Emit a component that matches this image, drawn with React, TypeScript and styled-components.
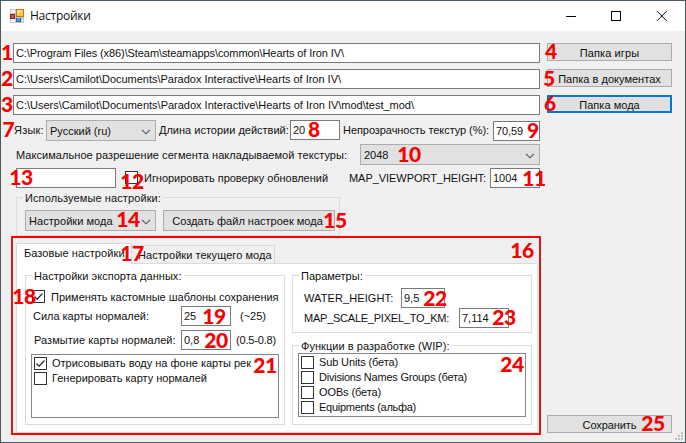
import React from 'react';
import styled, { createGlobalStyle, css } from 'styled-components';

const GlobalStyle = createGlobalStyle`
  *, *::before, *::after { box-sizing: border-box; }
  body {
    margin: 0;
    font: 11px/13px "Liberation Sans", Arial, sans-serif;
    color: #101010;
    white-space: pre;
  }
`;

const Window = styled.div`
  position: relative;
  display: flex;
  flex-direction: column;
  width: 686px;
  height: 443px;
  background: #f0f0f0;
  border: 1px solid #4d5a63;
  overflow: hidden;
`;

const TitleBar = styled.header`
  display: flex;
  align-items: center;
  flex: none;
  height: 30px;
  padding: 0 1px 0 9px;
  background: #fff;
`;

const Title = styled.h1`
  flex: 1;
  margin: 0 0 0 6px;
  font: 400 12px/16px "Open Sans", "Noto Sans", sans-serif;
  letter-spacing: -0.25px;
`;

const CaptionButton = styled.span`
  display: flex;
  align-items: center;
  width: 45px;
  height: 30px;
  padding-left: 17px;
`;

const Body = styled.main`
  display: flex;
  flex: 1;
  padding: 12px 0 0 10px;
`;

const FormColumn = styled.div`
  width: 530px;
`;

const PathList = styled.div`
  display: grid;
  gap: 6px;
  width: 527px;
  margin-left: 2px;
`;

const Row = styled.div<{ $top?: number; $left?: number; $height?: number }>`
  display: flex;
  align-items: flex-start;
  height: ${(p) => p.$height ?? 20}px;
  margin-top: ${(p) => p.$top ?? 0}px;
  margin-left: ${(p) => p.$left ?? 0}px;
`;

const Label = styled.span<{ $width?: number; $left?: number; $top?: number; $track?: number }>`
  flex: none;
  width: ${(p) => (p.$width ? `${p.$width}px` : 'auto')};
  margin-left: ${(p) => p.$left ?? 0}px;
  margin-top: ${(p) => p.$top ?? 4}px;
  letter-spacing: ${(p) => p.$track ?? 0}px;
`;

const Field = styled.div<{ $width?: number; $track?: number; $top?: number }>`
  flex: none;
  width: ${(p) => (p.$width ? `${p.$width}px` : 'auto')};
  height: 20px;
  margin-top: ${(p) => p.$top ?? 0}px;
  padding: 3px 0 0 2px;
  border: 1px solid #7a7a7a;
  background: #fff;
  letter-spacing: ${(p) => p.$track ?? 0}px;
`;

const SelectBox = styled.div<{ $width: number; $track?: number }>`
  display: flex;
  flex: none;
  align-items: center;
  justify-content: space-between;
  width: ${(p) => p.$width}px;
  height: 21px;
  padding: 2px 4px 0 3px;
  border: 1px solid #adadad;
  background: #e1e1e1;
  letter-spacing: ${(p) => p.$track ?? 0}px;
`;

const Button = styled.button<{ $width: number; $focused?: boolean; $track?: number }>`
  flex: none;
  width: ${(p) => p.$width}px;
  height: 18px;
  padding: 3px 0 0;
  border: 1px solid #adadad;
  background: #e1e1e1;
  color: inherit;
  font: inherit;
  text-align: center;
  letter-spacing: ${(p) => p.$track ?? 0}px;
  ${(p) => p.$focused && css`
    border-color: #0078d7;
    box-shadow: inset 0 0 0 1px #0078d7;
  `}
`;

const CreateButton = styled(Button)`
  height: 21px;
  margin-left: 7px;
  padding: 2px 3px 0 0;
`;

const ActionColumn = styled.aside`
  display: flex;
  flex-direction: column;
  gap: 8px;
  margin-left: 6px;
`;

const SaveButton = styled(Button)`
  margin: auto 0 9px;
`;

const Group = styled.fieldset<{ $width: number; $height: number; $left?: number; $top?: number }>`
  width: ${(p) => p.$width}px;
  height: ${(p) => p.$height}px;
  min-width: 0;
  margin: ${(p) => p.$top ?? 0}px 0 0 ${(p) => p.$left ?? 0}px;
  padding: 0;
  border: 1px solid #dcdcdc;
`;

const Legend = styled.legend<{ $track?: number }>`
  height: 13px;
  margin-left: 6px;
  padding: 0 2px;
  line-height: 15px;
  letter-spacing: ${(p) => p.$track ?? 0}px;
`;

const Box = styled.span<{ $left?: number; $top?: number }>`
  display: grid;
  place-items: center;
  flex: none;
  width: 13px;
  height: 13px;
  margin-left: ${(p) => p.$left ?? 0}px;
  margin-top: ${(p) => p.$top ?? 0}px;
  border: 1px solid #333;
  background: #fff;
`;

const TabFrame = styled.section`
  width: 530px;
  height: 199px;
  padding: 5px 1px 0 3px;
  border: 2px solid #f00;
  border-left-color: #d61a1e;
  border-right-color: #d0181c;
`;

const TabStrip = styled.nav`
  position: relative;
  display: flex;
  align-items: flex-end;
  height: 21px;
  margin-bottom: -1px;
`;

const Tab = styled.div<{ $active?: boolean; $width: number; $track: number }>`
  width: ${(p) => p.$width}px;
  height: ${(p) => (p.$active ? 21 : 18)}px;
  margin-bottom: ${(p) => (p.$active ? 0 : 1)}px;
  padding: ${(p) => (p.$active ? '3px 0 0 7px' : '3px 0 0 6px')};
  border: 1px solid #d9d9d9;
  border-bottom: 0;
  border-left-width: ${(p) => (p.$active ? 1 : 0)}px;
  background: ${(p) => (p.$active ? '#fff' : '#f0f0f0')};
  letter-spacing: ${(p) => p.$track}px;
`;

const TabPane = styled.div`
  display: flex;
  width: 522px;
  height: 170px;
  padding: 5px 0 0 8px;
  border: 1px solid #dcdcdc;
  background: #fff;
`;

const CheckList = styled.div<{ $width: number; $height: number; $left: number; $top: number }>`
  display: flex;
  flex-direction: column;
  gap: 2px;
  width: ${(p) => p.$width}px;
  height: ${(p) => p.$height}px;
  margin: ${(p) => p.$top}px 0 0 ${(p) => p.$left}px;
  padding: 2px;
  border: 1px solid #828790;
`;

const CheckRow = styled.div`
  display: flex;
  height: 13px;
`;

const Marker = styled.span<{ $x: number; $y: number }>`
  position: absolute;
  left: ${(p) => p.$x - 21}px;
  top: ${(p) => p.$y - 16.5}px;
  width: 40px;
  font: 900 21px/30px Lato, "Open Sans", sans-serif;
  letter-spacing: -0.4px;
  text-align: center;
  color: #f80000;
`;

const Grip = styled.svg`
  position: absolute;
  right: 1px;
  bottom: 1px;
`;

const AppIcon = () => (
  <svg width="14" height="14" viewBox="0 0 14 14">
    <rect width="14" height="14" fill="#c4c4c4" />
    <path d="M1 1h4v3H1zM1 10h4v3H1zM12 10h1v3h-1z" fill="#f4f4f4" />
    <rect x="6" y="0" width="8" height="8" fill="#b67a18" />
    <rect x="7" y="1" width="6" height="6" fill="#fcc640" />
    <path d="M7 1h5l-5 5z" fill="#ffe48c" />
    <rect x="0" y="5" width="5" height="5" fill="#8c1c14" />
    <rect x="1" y="6" width="3" height="3" fill="#d8543c" />
    <rect x="6" y="9" width="5" height="4" fill="#2a62c4" />
    <rect x="7" y="9" width="3" height="3" fill="#5a9cf4" />
  </svg>
);

const Chevron = () => (
  <svg width="10" height="6" viewBox="0 0 10 6">
    <path d="M1 .8l4 4 4-4" fill="none" stroke="#505050" strokeWidth="1.1" />
  </svg>
);

const Tick = () => (
  <svg width="11" height="11" viewBox="0 0 11 11">
    <path d="M1.5 5.5l2.6 2.6 5.4-5.6" fill="none" stroke="#222" strokeWidth="1.2" />
  </svg>
);

const paths = [
  { text: 'C:\\Program Files (x86)\\Steam\\steamapps\\common\\Hearts of Iron IV\\', track: -0.09 },
  { text: 'C:\\Users\\Camilot\\Documents\\Paradox Interactive\\Hearts of Iron IV\\', track: -0.013 },
  { text: 'C:\\Users\\Camilot\\Documents\\Paradox Interactive\\Hearts of Iron IV\\mod\\test_mod\\', track: -0.008 },
];

const exportOptions = [
  { text: 'Отрисовывать воду на фоне карты рек', track: -0.003, checked: true },
  { text: 'Генерировать карту нормалей', track: 0.004, checked: false },
];

const wipOptions = [
  { text: 'Sub Units (бета)', track: -0.128 },
  { text: 'Divisions Names Groups (бета)', track: -0.22 },
  { text: 'OOBs (бета)', track: -0.118 },
  { text: 'Equipments (альфа)', track: -0.273 },
];

const markers: [number, number, number][] = [
  [1, 7, 52.5], [2, 7, 78.5], [3, 7, 104.5], [4, 551, 51], [5, 549, 78.5],
  [6, 550, 103.5], [7, 8.5, 129.5], [8, 314, 129.5], [9, 533, 130.5],
  [10, 409, 154.5], [11, 534, 178.5], [12, 132, 181], [13, 21, 177],
  [14, 128, 219.5], [15, 335, 220.5], [16, 522, 250.5], [17, 132, 253.5],
  [18, 24, 296], [19, 214, 316], [20, 216, 340.5], [21, 265, 365.5],
  [22, 435, 298.5], [23, 504, 317.5], [24, 512, 364.5], [25, 653, 423.5],
];

export default function App() {
  return (
    <>
      <GlobalStyle />
      <Window>
        <TitleBar>
          <AppIcon />
          <Title>Настройки</Title>
          <CaptionButton>
            <svg width="10" height="10"><path d="M0 5.5h10" stroke="#000" /></svg>
          </CaptionButton>
          <CaptionButton>
            <svg width="10" height="10"><rect x=".5" y=".5" width="9" height="9" fill="none" stroke="#000" /></svg>
          </CaptionButton>
          <CaptionButton>
            <svg width="11" height="10"><path d="M1 .2l9.6 9.6M10.6.2L1 9.8" stroke="#000" /></svg>
          </CaptionButton>
        </TitleBar>
        <Body>
          <FormColumn>
            <PathList>
              {paths.map((p) => (
                <Field key={p.text} $track={p.track}>{p.text}</Field>
              ))}
            </PathList>
            <Row $top={5} $left={3} $height={21}>
              <Label $width={32} $track={0.2}>Язык:</Label>
              <SelectBox $width={110}>Русский (ru)<Chevron /></SelectBox>
              <Label $left={3} $width={131}>Длина истории действий:</Label>
              <Field $width={50}>20</Field>
              <Label $left={3} $width={150} $track={-0.065}>Непрозрачность текстур (%):</Label>
              <Field $width={47} $track={-0.1} $top={1}>70,59</Field>
            </Row>
            <Row $top={3} $left={5} $height={21}>
              <Label $width={344} $top={5} $track={0.05}>Максимальное разрешение сегмента накладываемой текстуры:</Label>
              <SelectBox $width={180}>2048<Chevron /></SelectBox>
            </Row>
            <Row $top={3} $left={5}>
              <Field $width={100} />
              <Box $left={9} $top={3} />
              <Label $left={6} $width={205} $track={-0.024}>Игнорировать проверку обновлений</Label>
              <Label $width={141} $track={-0.047}>MAP_VIEWPORT_HEIGHT:</Label>
              <Field $width={50}>1004</Field>
            </Row>
            <Group $width={324} $height={45} $left={5} $top={3}>
              <Legend $track={0.105}>Используемые настройки:</Legend>
              <Row $top={6} $left={8} $height={21}>
                <SelectBox $width={131} $track={0.05}>Настройки мода<Chevron /></SelectBox>
                <CreateButton $width={172}>Создать файл настроек мода</CreateButton>
              </Row>
            </Group>
            <TabFrame>
              <TabStrip>
                <Tab $active $width={116} $track={0.08}>Базовые настройки</Tab>
                <Tab $width={143} $track={0.05}>Настройки текущего мода</Tab>
              </TabStrip>
              <TabPane>
                <Group $width={260} $height={156}>
                  <Legend $track={0.05}>Настройки экспорта данных:</Legend>
                  <Row $top={8} $left={6} $height={16}>
                    <Box><Tick /></Box>
                    <Label $left={6} $top={1} $track={-0.02}>Применять кастомные шаблоны сохранения</Label>
                  </Row>
                  <Row $left={7}>
                    <Label $width={148} $track={-0.023}>Сила карты нормалей:</Label>
                    <Field $width={50}>25</Field>
                    <Label $left={9}>(~25)</Label>
                  </Row>
                  <Row $top={4} $left={8}>
                    <Label $width={147} $track={0.04}>Размытие карты нормалей:</Label>
                    <Field $width={50}>0,8</Field>
                    <Label $left={5} $track={-0.175}>(0.5-0.8)</Label>
                  </Row>
                  <CheckList $width={248} $height={64} $left={5} $top={4}>
                    {exportOptions.map((o) => (
                      <CheckRow key={o.text}>
                        <Box>{o.checked && <Tick />}</Box>
                        <Label $left={5} $top={0} $track={o.track}>{o.text}</Label>
                      </CheckRow>
                    ))}
                  </CheckList>
                </Group>
                <div>
                  <Group $width={240} $height={64} $left={7}>
                    <Legend>Параметры:</Legend>
                    <Row $top={6} $left={11}>
                      <Label $width={97} $track={0.1}>WATER_HEIGHT:</Label>
                      <Field $width={44}>9,5</Field>
                    </Row>
                    <Row $left={11}>
                      <Label $width={155} $track={-0.237}>MAP_SCALE_PIXEL_TO_KM:</Label>
                      <Field $width={50}>7,114</Field>
                    </Row>
                  </Group>
                  <Group $width={240} $height={86} $left={7} $top={6}>
                    <Legend $track={0.05}>Функции в разработке (WIP):</Legend>
                    <CheckList $width={228} $height={64} $left={5} $top={1}>
                      {wipOptions.map((o) => (
                        <CheckRow key={o.text}>
                          <Box />
                          <Label $left={5} $top={0} $track={o.track}>{o.text}</Label>
                        </CheckRow>
                      ))}
                    </CheckList>
                  </Group>
                </div>
              </TabPane>
            </TabFrame>
          </FormColumn>
          <ActionColumn>
            <Button $width={125} $track={0.1}>Папка игры</Button>
            <Button $width={125} $track={0.02}>Папка в документах</Button>
            <Button $width={125} $track={0.03} $focused>Папка мода</Button>
            <SaveButton $width={125} $track={-0.1}>Сохранить</SaveButton>
          </ActionColumn>
        </Body>
        {markers.map(([n, x, y]) => (
          <Marker key={n} $x={x} $y={y}>{n}</Marker>
        ))}
        <Grip width="9" height="9" fill="#bdbdbd">
          <path d="M6 0h2v2H6zM3 3h2v2H3zM6 3h2v2H6zM0 6h2v2H0zM3 6h2v2H3zM6 6h2v2H6z" />
        </Grip>
      </Window>
    </>
  );
}
